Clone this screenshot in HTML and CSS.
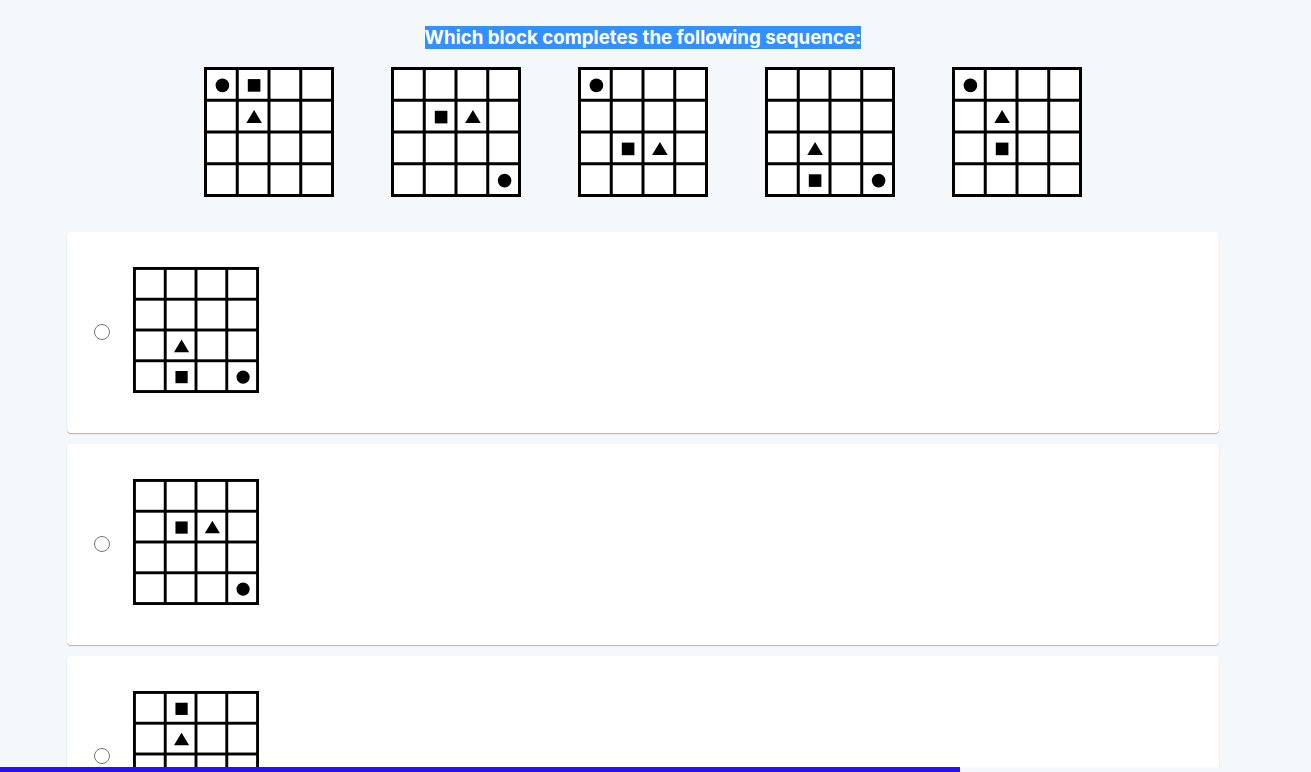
FILE: index.html
```html
<!DOCTYPE html>
<html lang="en">
<head>
<meta charset="utf-8">
<title>Sequence question</title>
<link rel="stylesheet" href="styles.css">
</head>
<body>
<svg class="defs" aria-hidden="true">
  <defs>
    <g id="grid">
      <rect x="0" y="0" width="130" height="130" fill="#fff"/>
      <rect x="0" y="0" width="3" height="130" fill="#000"/>
      <rect x="31.75" y="0" width="3" height="130" fill="#000"/>
      <rect x="63.5" y="0" width="3" height="130" fill="#000"/>
      <rect x="95.25" y="0" width="3" height="130" fill="#000"/>
      <rect x="127" y="0" width="3" height="130" fill="#000"/>
      <rect x="0" y="0" width="130" height="3" fill="#000"/>
      <rect x="0" y="31.75" width="130" height="3" fill="#000"/>
      <rect x="0" y="63.5" width="130" height="3" fill="#000"/>
      <rect x="0" y="95.25" width="130" height="3" fill="#000"/>
      <rect x="0" y="127" width="130" height="3" fill="#000"/>
    </g>
    <circle id="c" cx="0" cy="0" r="6.8" fill="#000"/>
    <rect id="s" x="-6.3" y="-6.3" width="12.6" height="12.6" fill="#000"/>
    <polygon id="t" points="-7.8,6 7.8,6 0,-7" fill="#000"/>
  </defs>
</svg>

<main class="page">
  <h1 class="title"><span class="hl">Which block completes the following sequence:</span></h1>

  <div class="sequence">
    <svg class="block" viewBox="0 0 130 130">
      <use href="#grid"/>
      <use href="#c" x="18.4" y="18.4"/>
      <use href="#s" x="50.1" y="18.4"/>
      <use href="#t" x="50.1" y="50.1"/>
    </svg>
    <svg class="block" viewBox="0 0 130 130">
      <use href="#grid"/>
      <use href="#s" x="50.1" y="50.1"/>
      <use href="#t" x="81.9" y="50.1"/>
      <use href="#c" x="113.6" y="113.6"/>
    </svg>
    <svg class="block" viewBox="0 0 130 130">
      <use href="#grid"/>
      <use href="#c" x="18.4" y="18.4"/>
      <use href="#s" x="50.1" y="81.9"/>
      <use href="#t" x="81.9" y="81.9"/>
    </svg>
    <svg class="block" viewBox="0 0 130 130">
      <use href="#grid"/>
      <use href="#t" x="50.1" y="81.9"/>
      <use href="#s" x="50.1" y="113.6"/>
      <use href="#c" x="113.6" y="113.6"/>
    </svg>
    <svg class="block" viewBox="0 0 130 130">
      <use href="#grid"/>
      <use href="#c" x="18.4" y="18.4"/>
      <use href="#t" x="50.1" y="50.1"/>
      <use href="#s" x="50.1" y="81.9"/>
    </svg>
  </div>

  <div class="options">
    <label class="card">
      <input class="radio" type="radio" name="answer" value="a">
      <svg class="option-block" viewBox="0 0 130 130">
        <use href="#grid"/>
        <use href="#t" x="50.1" y="81.9"/>
        <use href="#s" x="50.1" y="113.6"/>
        <use href="#c" x="113.6" y="113.6"/>
      </svg>
    </label>
    <label class="card">
      <input class="radio" type="radio" name="answer" value="b">
      <svg class="option-block" viewBox="0 0 130 130">
        <use href="#grid"/>
        <use href="#s" x="50.1" y="50.1"/>
        <use href="#t" x="81.9" y="50.1"/>
        <use href="#c" x="113.6" y="113.6"/>
      </svg>
    </label>
    <label class="card">
      <input class="radio" type="radio" name="answer" value="c">
      <svg class="option-block" viewBox="0 0 130 130">
        <use href="#grid"/>
        <use href="#s" x="50.1" y="18.4"/>
        <use href="#t" x="50.1" y="50.1"/>
        <use href="#c" x="113.6" y="113.6"/>
      </svg>
    </label>
  </div>
</main>

<div class="progress"><div class="progress-fill" style="width:73.23%"></div></div>
</body>
</html>
```

FILE: styles.css
```css
html, body {
  margin: 0;
  padding: 0;
}

body {
  background: #f5f8fb;
  font-family: Inter, "Noto Sans", "Liberation Sans", sans-serif;
  color: #111;
  overflow: hidden;
}

.defs {
  position: absolute;
  width: 0;
  height: 0;
  overflow: hidden;
}

.page {
  width: 1152px;
  margin-left: 67px;
  padding-top: 27px;
}

.title {
  margin: 0;
  text-align: center;
  font-size: 18.7px;
  font-weight: 700;
  line-height: 22px;
}

.hl {
  background: #3390ff;
  color: #fff;
}

.sequence {
  display: flex;
  justify-content: center;
  gap: 57px;
  margin-top: 18px;
}

.block {
  display: block;
  width: 130px;
  height: 130px;
}

.options {
  display: flex;
  flex-direction: column;
  gap: 11px;
  margin-top: 35px;
}

.card {
  display: flex;
  align-items: flex-start;
  box-sizing: border-box;
  height: 201px;
  padding: 35px 0 0 27px;
  background: #fff;
  border-radius: 4px;
  box-shadow: 0 1px 1px rgba(0, 0, 0, 0.28), 0 0 1px rgba(0, 0, 0, 0.06);
  cursor: pointer;
}

.radio {
  appearance: none;
  -webkit-appearance: none;
  box-sizing: border-box;
  margin: 57px 23px 0 0;
  width: 16px;
  height: 16px;
  border: 1.8px solid #767676;
  border-radius: 50%;
  background: #fff;
  flex: none;
}

.option-block {
  display: block;
  width: 126px;
  height: 126px;
  flex: none;
}

.progress {
  position: fixed;
  left: 0;
  right: 0;
  bottom: 0;
  height: 5px;
  background: #f5f8fb;
}

.progress-fill {
  height: 100%;
  background: #2a0ff2;
}
```
